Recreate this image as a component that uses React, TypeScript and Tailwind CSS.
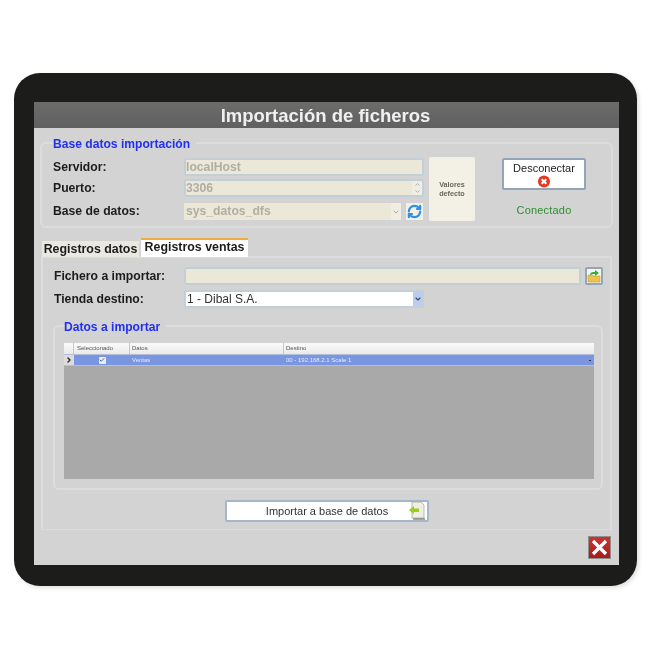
import React from "react";
import { Check, ChevronDown, ChevronRight, ChevronUp, RefreshCw } from "lucide-react";

const labelClass = "text-[12.2px] font-bold text-[#1c1c1c]";
const inputClass = "flex items-center bg-[#ece8d8] border-2 border-[#c3cfd8] rounded-[2px] text-[12.2px] font-bold text-[#b0aea3]";

const GroupLegend: React.FC<{ left: string; children: React.ReactNode }> = ({ left, children }) => (
  <span className={`absolute top-[-7px] ${left} bg-[#d3d3d3] pr-[6px] text-[12.1px] leading-[14px] font-bold text-[#2130f0]`}>
    {children}
  </span>
);

const Row: React.FC<{ className: string; label: string; children: React.ReactNode }> = ({ className, label, children }) => (
  <div className={`flex items-center ${className}`}>
    <span className={`${labelClass} w-[131px]`}>{label}</span>
    {children}
  </div>
);

const RedCircle = () => (
  <svg width="14" height="14" viewBox="0 0 14 14">
    <circle cx="7" cy="7" r="6.5" fill="#e23a22" />
    <path d="M4.5 4.5 9.5 9.5M9.5 4.5 4.5 9.5" stroke="#fff" strokeWidth="2.2" />
  </svg>
);

const FolderArrow = () => (
  <svg width="14" height="14" viewBox="0 0 14 14">
    <path d="M1 6h4l1 1h7v6H1z" fill="#eec24e" stroke="#c49a30" strokeWidth="0.6" />
    <path d="M3 5C4 3 6 3 8 3V1l4 3-4 3V5C6 5 5 5 3 6z" fill="#2fae3a" />
  </svg>
);

const DocArrow = () => (
  <svg width="18" height="20" viewBox="0 0 18 20">
    <path d="M4 1h9l3 3v13H4z" fill="#eeeee4" stroke="#a9a99a" strokeWidth="0.8" />
    <path d="M5 18h12" stroke="#6b6b60" strokeWidth="1.2" />
    <path d="M1 9l5-4v2.500h5v3.500H6V13z" fill="#9ccc1e" />
  </svg>
);

export default function App() {
  return (
    <div className="h-[650px] w-[650px] bg-white pt-[73px] pl-[14px] font-['Liberation_Sans',sans-serif] blur-[0.5px]">
      <div className="flex h-[513px] w-[623px] rounded-[26px] bg-[#1c1c1b] pt-[29px] pr-[18px] pb-[21px] pl-[20px] shadow-[2px_2px_4px_rgba(0,0,0,0.12)]">
        <div className="flex flex-1 flex-col bg-[#d3d3d3]">
          <div className="flex h-[26px] items-center justify-center bg-gradient-to-b from-[#6c6c6c] to-[#606060] pt-[2px] pr-[2px] text-[18.5px] font-bold text-[#f0f0f0]">
            Importación de ficheros
          </div>

          {/* Base datos importación */}
          <div className="relative mx-[6px] mt-[14px] h-[86px] rounded-[6px] border-2 border-[#dcdcdc] pt-[14px] pl-[11px]">
            <GroupLegend left="left-[11px]">Base datos importación</GroupLegend>
            <div className="flex">
              <div className="flex w-[374px] flex-col">
                <Row className="h-[18px]" label="Servidor:">
                  <div className={`${inputClass} h-[18px] w-[240px]`}>localHost</div>
                </Row>
                <Row className="mt-[3px] h-[18px]" label="Puerto:">
                  <div className={`${inputClass} h-[18px] w-[240px] justify-between`}>
                    3306
                    <span className="flex h-full w-[10px] flex-col items-center justify-center bg-[#f0eee3] text-[#a9a9a9]">
                      <ChevronUp size={7} strokeWidth={3} />
                      <ChevronDown size={7} strokeWidth={3} />
                    </span>
                  </div>
                </Row>
                <div className="mt-[6px] flex h-[17px] items-center">
                  <Row className="h-[17px]" label="Base de datos:">
                    <div className="flex h-[17px] w-[217px] items-center justify-between bg-[#ece8d8] pl-[2px] text-[12.2px] font-bold text-[#b0aea3]">
                      sys_datos_dfs
                      <span className="flex h-full w-[10px] items-center justify-center bg-[#f0eee3] text-[#a9a9a9]">
                        <ChevronDown size={8} strokeWidth={3} />
                      </span>
                    </div>
                  </Row>
                  <div className="ml-[5px] flex h-[17px] w-[17px] items-center justify-center bg-[#f3f1e6]">
                    <RefreshCw size={15} strokeWidth={3.5} className="text-[#2f8fe8]" />
                  </div>
                </div>
              </div>
              <div className="mt-[-1px] ml-[2px] flex h-[64px] w-[46px] items-center justify-center rounded-[2px] bg-[#f3f1e6] text-center text-[7.2px] leading-[9px] font-bold text-[#67675f]">
                Valores
                <br />
                defecto
              </div>
              <div className="ml-[27px] flex w-[84px] flex-col items-center">
                <div className="flex h-[32px] w-[84px] flex-col items-center rounded-[2px] border-2 border-[#93a5b8] bg-white pt-[1px] text-[11px] leading-[14px] text-[#222]">
                  Desconectar
                  <RedCircle />
                </div>
                <span className="mt-[14px] text-[11px] leading-[13px] text-[#2f8f2f] tracking-[0.2px]">Conectado</span>
              </div>
            </div>
          </div>

          {/* Tabs */}
          <div className="relative z-10 mt-[10px] ml-[8px] flex h-[19px] items-end">
            <div className="flex h-[16px] w-[97px] items-center justify-center bg-[#e9e9e2] text-[12.4px] font-bold whitespace-nowrap text-[#1c1c1c]">
              Registros datos
            </div>
            <div className="ml-[2px] flex h-[19px] w-[107px] items-center justify-center border-t-2 border-[#f0ab3c] bg-white pb-[2px] text-[12.4px] font-bold whitespace-nowrap text-[#1c1c1c]">
              Registros ventas
            </div>
          </div>
          <div className="mx-[7px] mt-[-1px] flex h-[274px] flex-col border-2 border-b border-[#dcdcdc] pt-[9px]">
            <div className="flex h-[18px] items-center">
              <span className={`${labelClass} w-[141px] pl-[11px]`}>Fichero a importar:</span>
              <div className="h-[18px] w-[397px] rounded-[2px] border-2 border-[#c3cfd8] bg-[#ece8d8]" />
              <div className="ml-[4px] flex h-[18px] w-[18px] items-center justify-center rounded-[2px] border-2 border-[#93a5b8] bg-[#f5f5ee]">
                <FolderArrow />
              </div>
            </div>
            <div className="mt-[5px] flex h-[18px] items-center">
              <span className={`${labelClass} w-[141px] pl-[11px]`}>Tienda destino:</span>
              <div className="flex h-[18px] w-[240px] items-center justify-between rounded-[2px] border-2 border-[#c3cfd8] bg-white pl-[1px] text-[12px] text-[#333]">
                1 - Dibal S.A.
                <span className="flex h-full w-[9px] items-center justify-center bg-[#b9cdf3] text-[#3d4a66]">
                  <ChevronDown size={8} strokeWidth={3.5} />
                </span>
              </div>
            </div>

            {/* Datos a importar */}
            <div className="relative mt-[17px] ml-[10px] h-[165px] w-[550px] rounded-[6px] border-2 border-[#dcdcdc] pt-[16px] pl-[9px]">
              <GroupLegend left="left-[9px]">Datos a importar</GroupLegend>
              <div className="flex h-[136px] w-[530px] flex-col bg-[#a9a9a9] text-[6px] leading-[7px] text-[#555]">
                <div className="flex h-[11px] items-center bg-gradient-to-b from-[#fbfbfb] to-[#e9e9e9]">
                  <span className="h-full w-[10px] border-r border-[#c8c8c8]" />
                  <span className="flex h-full w-[56px] items-center border-r border-[#c8c8c8] pl-[3px]">Seleccionado</span>
                  <span className="flex h-full w-[154px] items-center border-r border-[#c8c8c8] pl-[2px]">Datos</span>
                  <span className="pl-[2px]">Destino</span>
                </div>
                <div className="flex h-[12px] items-center border-y border-[#b4bed8] bg-[#7b96e0] text-[#e4ebfb]">
                  <span className="flex h-full w-[10px] items-center justify-center bg-[#dcdcdc] text-[#222]">
                    <ChevronRight size={8} strokeWidth={4} />
                  </span>
                  <span className="flex h-full w-[56px] items-center justify-center">
                    <span className="flex h-[7px] w-[7px] items-center justify-center rounded-[1px] bg-[#e8eefb] text-[#4a5f9a]">
                      <Check size={6} strokeWidth={4} />
                    </span>
                  </span>
                  <span className="w-[154px] pl-[2px]">Ventas</span>
                  <span className="flex-1 pl-[2px]">00 - 192.168.2.1 Scale 1</span>
                  <span className="mr-[3px] h-[1px] w-[2px] bg-[#333]" />
                </div>
              </div>
            </div>

            <div className="mt-[10px] ml-[182px] flex h-[22px] w-[204px] items-center rounded-[2px] border-2 border-[#a6b6c9] bg-white">
              <span className="flex-1 pl-[22px] text-center text-[11px] text-[#333]">Importar a base de datos</span>
              <span className="mr-[1px] ml-[3px]">
                <DocArrow />
              </span>
            </div>
          </div>

          {/* Cerrar */}
          <div className="flex justify-end pt-[6px] pr-[8px]">
            <div className="flex h-[23px] w-[23px] items-center justify-center border border-[#8f8f8f] bg-gradient-to-b from-[#cc3333] to-[#a81c1c]">
              <svg width="17" height="17" viewBox="0 0 17 17">
                <path d="M2 2 15 15M15 2 2 15" stroke="#fff" strokeWidth="3.2" />
              </svg>
            </div>
          </div>
        </div>
      </div>
    </div>
  );
}
